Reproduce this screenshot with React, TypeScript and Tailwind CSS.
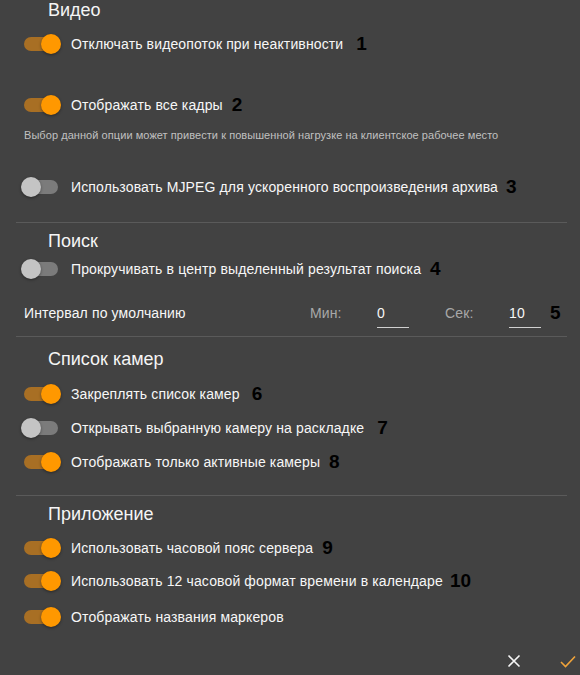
import React from "react";

function Toggle({ on }: { on: boolean }) {
  return (
    <div className="relative w-[58px] h-[34px] shrink-0">
      <div
        className={
          "absolute left-[12px] top-[10px] w-[34px] h-[14px] rounded-[7px] " +
          (on ? "bg-[#a86f24]" : "bg-[#7b7b7b]")
        }
      />
      <div
        className={
          "absolute top-[7px] w-[20px] h-[20px] rounded-full shadow-[0_1px_3px_rgba(0,0,0,0.4)] " +
          (on ? "left-[29px] bg-[#ff9800]" : "left-[9px] bg-[#c4c4c4]")
        }
      />
    </div>
  );
}

function Row({
  on,
  label,
  num,
  numClass,
  className,
}: {
  on: boolean;
  label: string;
  num?: string;
  numClass?: string;
  className?: string;
}) {
  return (
    <div className={"flex items-center h-[34px] pl-[12px] " + (className || "")}>
      <Toggle on={on} />
      <span className="ml-[1px] text-[14px] tracking-[0.13px] text-[#f7f7f7] leading-[34px] whitespace-nowrap">
        {label}
      </span>
      {num && (
        <span className={"text-[19px] font-bold text-black leading-[34px] " + (numClass || "")}>{num}</span>
      )}
    </div>
  );
}

function Heading({ children, className }: { children: React.ReactNode; className?: string }) {
  return (
    <div className={"h-[18px] leading-[18px] text-[18px] text-[#f5f5f5] pl-[48px] " + (className || "")}>
      {children}
    </div>
  );
}

function Divider({ className }: { className?: string }) {
  return <div className={"h-px bg-[#5a5a5a] ml-[16px] mr-[13px] " + (className || "")} />;
}

export default function App() {
  return (
    <div
      className="w-[580px] h-[675px] bg-[#424242] overflow-hidden flex flex-col"
      style={{ fontFamily: '"Liberation Sans", Arial, sans-serif' }}
    >
      <Heading className="mt-[1px]">Видео</Heading>
      <Row className="mt-[8px]" on label="Отключать видеопоток при неактивности" num="1" numClass="ml-[13px]" />
      <Row className="mt-[27px]" on label="Отображать все кадры" num="2" numClass="ml-[9px]" />
      <div className="mt-[6px] h-[14px] leading-[14px] text-[11px] tracking-[0.06px] text-[#c0c0c0] pl-[24px] whitespace-nowrap">
        Выбор данной опции может привести к повышенной нагрузке на клиентское рабочее место
      </div>
      <Row
        className="mt-[28px]"
        on={false}
        label="Использовать MJPEG для ускоренного воспроизведения архива"
        num="3"
        numClass="ml-[8px]"
      />
      <Divider className="mt-[18px]" />

      <Heading className="mt-[9px]">Поиск</Heading>
      <Row
        className="mt-[2px]"
        on={false}
        label="Прокручивать в центр выделенный результат поиска"
        num="4"
        numClass="ml-[9px]"
      />
      <div className="mt-[12px] h-[30px] flex items-center pl-[24px] text-[14px] tracking-[0.13px]">
        <span className="w-[286px] text-[#f7f7f7] whitespace-nowrap">Интервал по умолчанию</span>
        <span className="w-[67px] text-[#a8a8a8]">Мин:</span>
        <div className="w-[32px] h-[30px] border-b border-[#d0d0d0] text-[#f7f7f7] leading-[30px]">0</div>
        <span className="ml-[36px] w-[64px] text-[#a8a8a8]">Сек:</span>
        <div className="w-[32px] h-[30px] border-b border-[#d0d0d0] text-[#f7f7f7] leading-[30px]">10</div>
        <span className="ml-[9px] text-[19px] font-bold text-black">5</span>
      </div>
      <Divider className="mt-[8px]" />

      <Heading className="mt-[13px]">Список камер</Heading>
      <Row className="mt-[9px]" on label="Закреплять список камер" num="6" numClass="ml-[12px]" />
      <Row on={false} label="Открывать выбранную камеру на раскладке" num="7" numClass="ml-[13px]" />
      <Row on label="Отображать только активные камеры" num="8" numClass="ml-[9px]" />
      <Divider className="mt-[16px]" />

      <Heading className="mt-[9px]">Приложение</Heading>
      <Row className="mt-[8px] !h-[33px]" on label="Использовать часовой пояс сервера" num="9" numClass="ml-[9px]" />
      <Row on label="Использовать 12 часовой формат времени в календаре" num="10" numClass="ml-[7px]" />
      <Row className="mt-[2px]" on label="Отображать названия маркеров" />

      <div className="mt-[18px] flex items-center justify-end pr-[4px] h-[18px]">
        <svg width="14" height="14" viewBox="0 0 14 14" className="mr-[39px]">
          <path d="M1.5 1.5 L12.5 12.5 M12.5 1.5 L1.5 12.5" stroke="#f5f5f5" strokeWidth="1.6" fill="none" />
        </svg>
        <svg width="16" height="13" viewBox="0 0 16 13">
          <path d="M1 7 L5.5 11.5 L15 1.5" stroke="#f0a33a" strokeWidth="1.6" fill="none" />
        </svg>
      </div>
    </div>
  );
}
